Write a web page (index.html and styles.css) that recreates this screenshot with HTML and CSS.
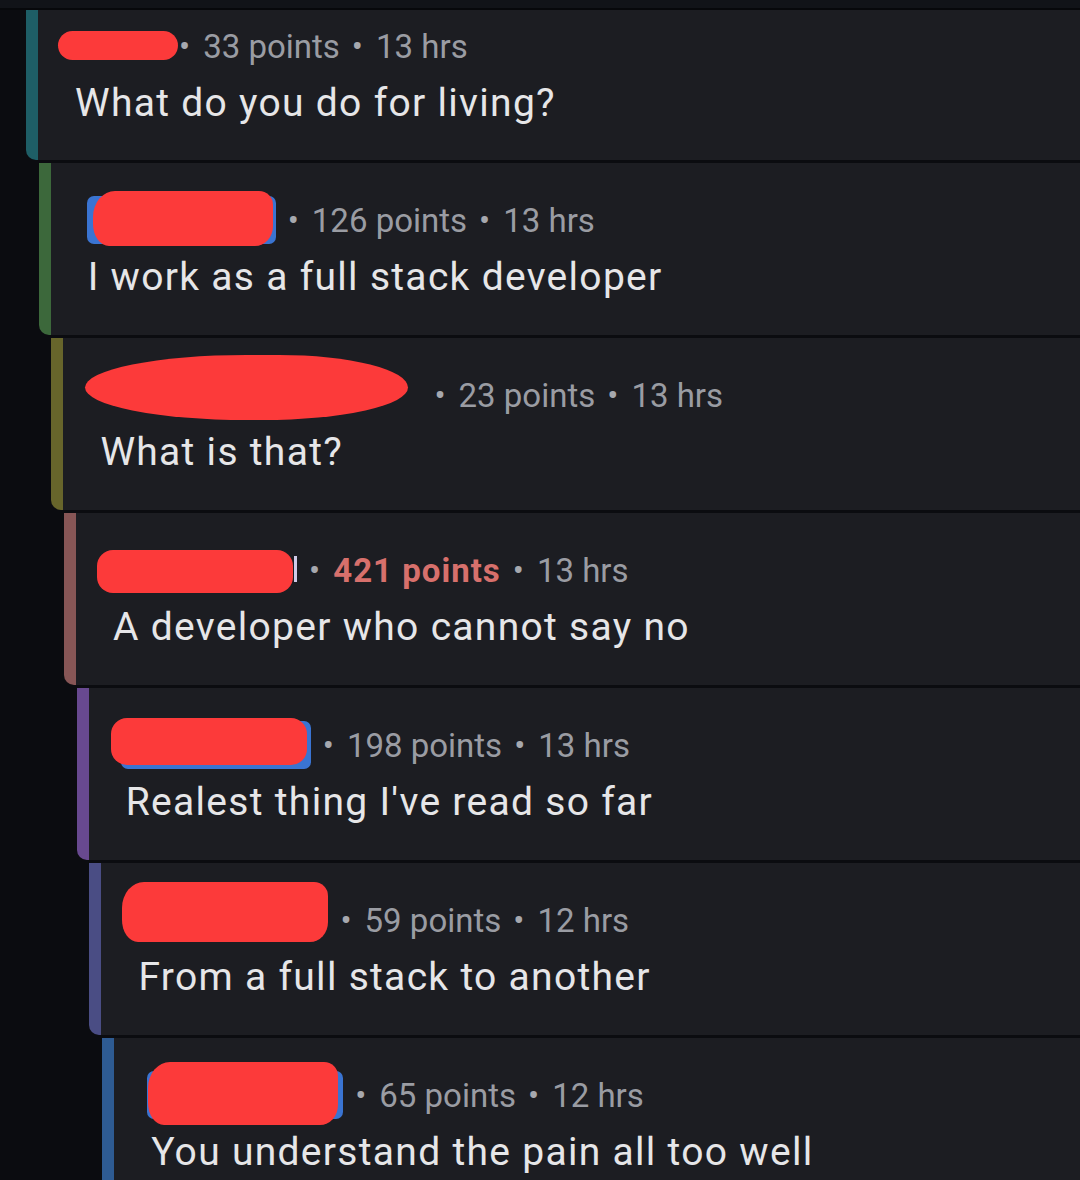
FILE: index.html
```html
<!DOCTYPE html>
<html lang="en">
<head>
    <meta charset="UTF-8">
    <meta name="viewport" content="width=device-width, initial-scale=1.0">
    <title>Comments</title>
    <link rel="stylesheet" href="styles.css">
</head>
<body>
    <div class="topbar"></div>
    <div class="thread">
        <div class="comment first c-teal">
            <div class="meta">
                <span class="author" style="width:92px"><i class="redact" style="left:-17px;right:-11px;top:9px;bottom:10px"></i></span>
                <span class="sep">&bull;</span>33 points<span class="sep">&bull;</span>13 hrs
            </div>
            <p class="text">What do you do for living?</p>
        </div>
        <div class="replies">
            <div class="comment c-green">
                <div class="meta">
                    <span class="author op" style="width:189px;margin-left:-1px"><i class="redact r-bump" style="left:6px;right:3px;top:-5px;bottom:-2px"></i></span>
                    <span class="sep">&bull;</span>126 points<span class="sep">&bull;</span>13 hrs
                </div>
                <p class="text">I work as a full stack developer</p>
            </div>
            <div class="replies">
                <div class="comment c-olive">
                    <div class="meta">
                        <span class="author" style="width:322px"><i class="redact r-lens" style="left:-15px;right:14px;top:-16px;bottom:-1px"></i></span>
                        <span class="sep">&bull;</span>23 points<span class="sep">&bull;</span>13 hrs
                    </div>
                    <p class="text">What is that?</p>
                </div>
                <div class="replies">
                    <div class="comment c-rose">
                        <div class="meta">
                            <span class="author tail" style="width:184px"><i class="redact" style="left:-16px;right:4px;top:4px;bottom:1px"></i></span>
                            <span class="sep">&bull;</span><b class="hot">421 points</b><span class="sep">&bull;</span>13 hrs
                        </div>
                        <p class="text">A developer who cannot say no</p>
                    </div>
                    <div class="replies">
                        <div class="comment c-purple">
                            <div class="meta">
                                <span class="author op" style="width:190px;margin-left:-5px"><i class="redact" style="left:-10px;right:4px;top:-3px;bottom:4px"></i></span>
                                <span class="sep">&bull;</span>198 points<span class="sep">&bull;</span>13 hrs
                            </div>
                            <p class="text">Realest thing I've read so far</p>
                        </div>
                        <div class="replies">
                            <div class="comment c-indigo">
                                <div class="meta">
                                    <span class="author" style="width:190px"><i class="redact r-bump" style="left:-16px;right:0;top:-14px;bottom:2px"></i></span>
                                    <span class="sep">&bull;</span>59 points<span class="sep">&bull;</span>12 hrs
                                </div>
                                <p class="text">From a full stack to another</p>
                            </div>
                            <div class="replies">
                                <div class="comment c-blue">
                                    <div class="meta">
                                        <span class="author op" style="width:196px;margin-left:-4px"><i class="redact r-bump" style="left:1px;right:5px;top:-9px;bottom:-6px"></i></span>
                                        <span class="sep">&bull;</span>65 points<span class="sep">&bull;</span>12 hrs
                                    </div>
                                    <p class="text">You understand the pain all too well</p>
                                </div>
                            </div>
                        </div>
                    </div>
                </div>
            </div>
        </div>
    </div>
</body>
</html>
```

FILE: styles.css
```css
body {
    margin: 0;
    background-color: #0b0c10;
    font-family: Roboto, "Noto Sans", sans-serif;
    overflow: hidden;
}
.topbar {
    height: 8px;
    background-color: #111318;
    border-bottom: 2px solid #07080b;
}
.thread {
    padding-left: 26px;
}
.replies {
    margin-top: 3px;
    padding-left: 12.7px;
}
.comment {
    background-color: #1c1d22;
    border-left: 12px solid #444;
    border-radius: 0 0 0 10px;
    padding: 33px 20px 25px 37px;
}
.comment.first {
    padding-top: 12px;
    padding-bottom: 24px;
}
.c-teal { border-left-color: #1e5e66; }
.c-green { border-left-color: #3c683b; }
.c-olive { border-left-color: #67652b; }
.c-rose { border-left-color: #875656; }
.c-purple { border-left-color: #684990; }
.c-indigo { border-left-color: #4a4d84; }
.c-blue { border-left-color: #2e5b92; }

.meta {
    display: flex;
    align-items: center;
    height: 48px;
    font-size: 33px;
    color: #9a9ca3;
    white-space: nowrap;
}
.sep {
    margin: 0 13px 0 12px;
    color: #a6a8ae;
}
.hot {
    color: #d7706c;
    font-weight: bold;
    letter-spacing: 1px;
}
.author {
    position: relative;
    display: inline-block;
    height: 48px;
    flex: none;
}
.author.op {
    background-color: #3a74d2;
    border-radius: 7px;
}
.author.tail::after {
    content: "";
    position: absolute;
    right: 0;
    top: 10px;
    bottom: 12px;
    width: 3px;
    background-color: #cfcbe8;
}
.redact {
    position: absolute;
    background-color: #fc3a3a;
    border-radius: 16px;
    z-index: 1;
}
.redact.r-bump {
    border-radius: 22px 14px 18px 16px / 26px 14px 20px 22px;
}
.redact.r-lens {
    border-radius: 50% 40% 45% 50% / 50%;
}
.text {
    margin: 0;
    font-size: 39px;
    letter-spacing: 1.3px;
    line-height: 66px;
    color: #e6e6e8;
    white-space: nowrap;
}
```
